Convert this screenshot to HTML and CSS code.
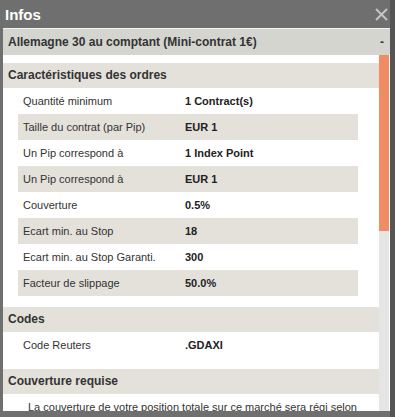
FILE: index.html
```html
<!DOCTYPE html>
<html lang="fr">
<head>
  <meta charset="UTF-8">
  <title>Infos</title>
  <link rel="stylesheet" href="styles.css">
</head>
<body>

  <div class="fenetre">
    <div class="titre">
      <span>Infos</span>
      <svg class="fermer" width="13" height="13" viewBox="0 0 13 13">
        <path d="M1 1 L12 12 M12 1 L1 12" stroke="#c4c4c4" stroke-width="2"/>
      </svg>
    </div>

    <div class="panneau">
      <div class="panneau-entete">
        <span>Allemagne 30 au comptant (Mini-contrat 1€)</span>
        <span class="replier">-</span>
      </div>

      <div class="defilement">
        <div class="contenu">
          <h3 class="section">Caractéristiques des ordres</h3>
          <table class="infos">
            <tr><td>Quantité minimum</td><td>1 Contract(s)</td></tr>
            <tr><td>Taille du contrat (par Pip)</td><td>EUR 1</td></tr>
            <tr><td>Un Pip correspond à</td><td>1 Index Point</td></tr>
            <tr><td>Un Pip correspond à</td><td>EUR 1</td></tr>
            <tr><td>Couverture</td><td>0.5%</td></tr>
            <tr><td>Ecart min. au Stop</td><td>18</td></tr>
            <tr><td>Ecart min. au Stop Garanti.</td><td>300</td></tr>
            <tr><td>Facteur de slippage</td><td>50.0%</td></tr>
          </table>

          <h3 class="section">Codes</h3>
          <table class="infos">
            <tr><td>Code Reuters</td><td>.GDAXI</td></tr>
          </table>

          <h3 class="section">Couverture requise</h3>
          <p class="texte">La couverture de votre position totale sur ce marché sera régi selon les paliers suivants.</p>
        </div>
        <div class="barre">
          <div class="curseur"></div>
        </div>
      </div>
    </div>
  </div>

</body>
</html>
```

FILE: styles.css
```css
body {
  margin: 0;
  font-family: "Liberation Sans", Arial, sans-serif;
  background-color: #6f6f6f;
  color: #333;
}

.fenetre {
  width: 395px;
  height: 417px;
  display: flex;
  flex-direction: column;
  box-sizing: border-box;
  border-right: 5px solid #555;
}

.titre {
  height: 28px;
  display: flex;
  align-items: center;
  justify-content: space-between;
  padding: 0 2px 0 5px;
  color: white;
  font-weight: bold;
  font-size: 15px;
}

.panneau {
  margin: 0 0 6px 3px;
  background-color: white;
  border-top: 1px solid #f4f4f2;
  flex: 1;
  display: flex;
  flex-direction: column;
  overflow: hidden;
}

.panneau-entete {
  height: 26px;
  background-color: #d5d5d0;
  display: flex;
  align-items: center;
  justify-content: space-between;
  padding: 0 6px 0 5px;
  font-size: 12px;
  font-weight: bold;
}

.defilement {
  flex: 1;
  display: flex;
  overflow: hidden;
}

.contenu {
  flex: 1;
  padding-top: 8px;
}

.section {
  margin: 0;
  height: 25px;
  line-height: 25px;
  padding-left: 5px;
  background-color: #e3e1da;
  font-size: 12px;
}

.infos {
  border-collapse: collapse;
  width: 340px;
  margin: 0 0 11px 15px;
  font-size: 11px;
}

.infos td {
  height: 26px;
  padding: 0 0 0 5px;
}

.infos td:first-child {
  width: 157px;
}

.infos td:last-child {
  font-weight: bold;
  color: #222;
}

.infos tr:nth-child(even) {
  background-color: #e3e1da;
}

.texte {
  margin: 7px 15px 0 25px;
  font-size: 11px;
}

.barre {
  width: 10px;
  margin-right: 1px;
  background-color: #e5e5e5;
}

.curseur {
  height: 176px;
  background-color: #ef8c64;
}
```
